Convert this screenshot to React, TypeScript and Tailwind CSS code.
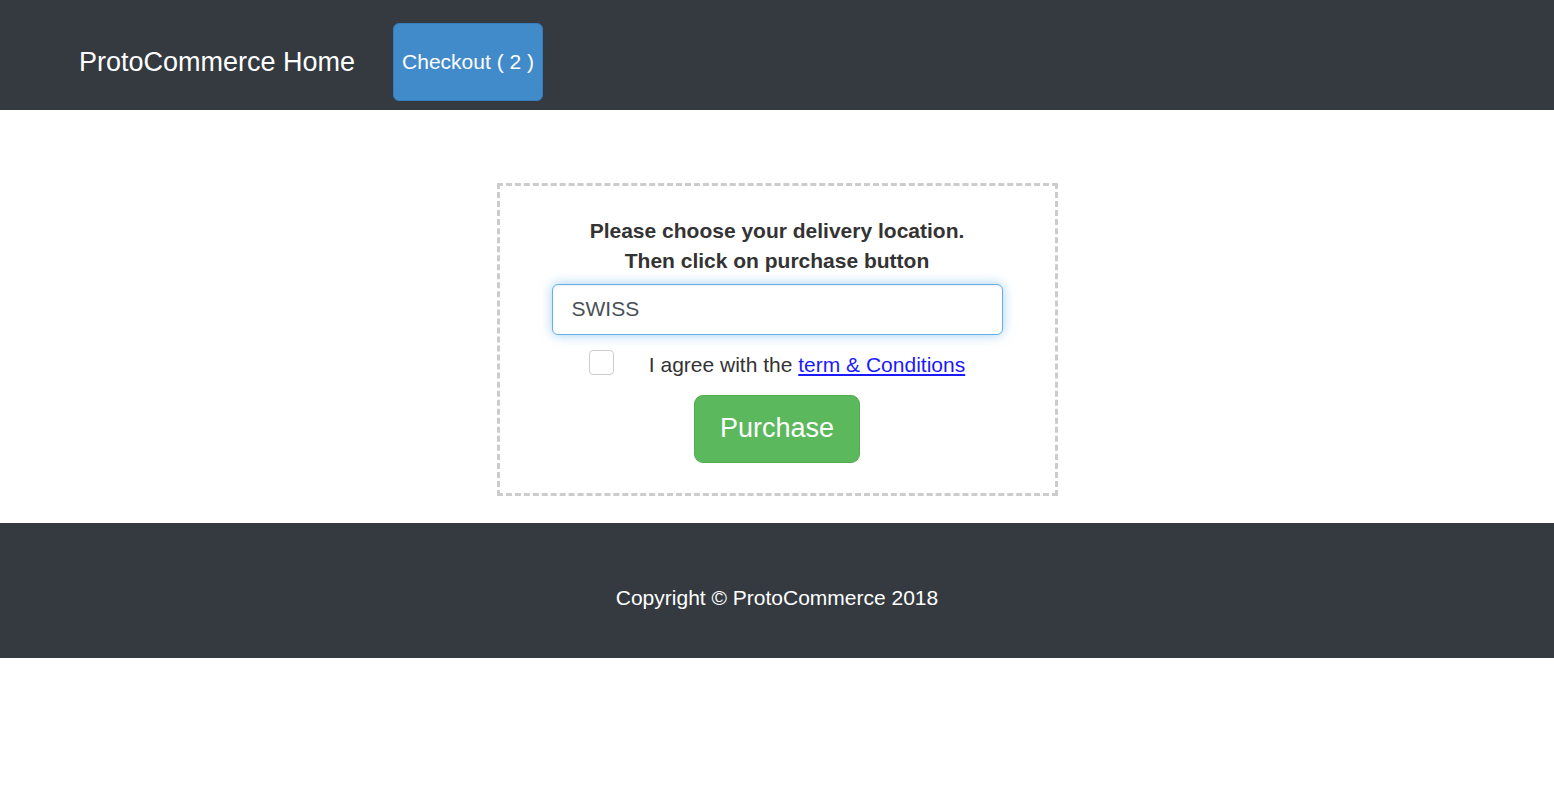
import { useState } from "react";

function Header() {
  return (
    <nav className="flex items-start bg-[#343a40] pt-[23px] pr-4 pb-[9px] pl-[79px] text-white">
      <a href="#home" className="mr-[38px] flex h-[78px] items-center text-[27px] leading-[40px]">
        ProtoCommerce Home
      </a>
      <a
        href="#checkout"
        className="flex h-[78px] items-center rounded-md border border-[#357ebd] bg-[#428bca] px-2 text-[21px] leading-[30px]"
      >
        Checkout ( 2 )
      </a>
    </nav>
  );
}

function DeliveryForm() {
  const [country, setCountry] = useState("SWISS");
  const [agreed, setAgreed] = useState(false);

  return (
    <form
      onSubmit={(event) => event.preventDefault()}
      className="flex w-full max-w-[561px] flex-col items-center border-[3px] border-dashed border-[#cccccc] px-[52px] py-[30px]"
    >
      <label htmlFor="country" className="text-center text-[21px] leading-[30px] font-bold">
        Please choose your delivery location.
        <br />
        Then click on purchase button
      </label>
      <input
        id="country"
        type="text"
        value={country}
        onChange={(event) => setCountry(event.target.value)}
        className="mt-2 h-[51px] w-full rounded-md border border-[#66afe9] bg-white px-[19px] pb-[2px] text-[21px] text-[#495057] shadow-[inset_0_1px_2px_rgba(0,0,0,0.075),0_0_12px_rgba(102,175,233,0.6)] outline-none"
      />
      <div className="mt-[15px] flex items-start gap-[35px]">
        <input
          id="agree"
          type="checkbox"
          checked={agreed}
          onChange={(event) => setAgreed(event.target.checked)}
          className="size-[25px] appearance-none rounded border border-[#cccccc] bg-white checked:bg-[#5cb85c]"
        />
        <label htmlFor="agree" className="text-[21px] leading-[30px]">
          I agree with the{" "}
          <a href="#terms" className="text-[#1a1aff] underline">
            term &amp; Conditions
          </a>
        </label>
      </div>
      <button
        type="submit"
        className="mt-[15px] h-[68px] rounded-[9px] border border-[#4cae4c] bg-[#5cb85c] px-[25px] pb-[2px] text-[27px] leading-[36px] text-white"
      >
        Purchase
      </button>
    </form>
  );
}

export default function App() {
  return (
    <div className="bg-white font-['Liberation_Sans',Arial,sans-serif] text-[#333333]">
      <Header />
      <main className="flex justify-center px-4 pt-[73px] pb-[27px]">
        <DeliveryForm />
      </main>
      <footer className="bg-[#343a40] pt-[60px] pb-[45px] text-center text-[21px] leading-[30px] text-white">
        <p>Copyright © ProtoCommerce 2018</p>
      </footer>
    </div>
  );
}
